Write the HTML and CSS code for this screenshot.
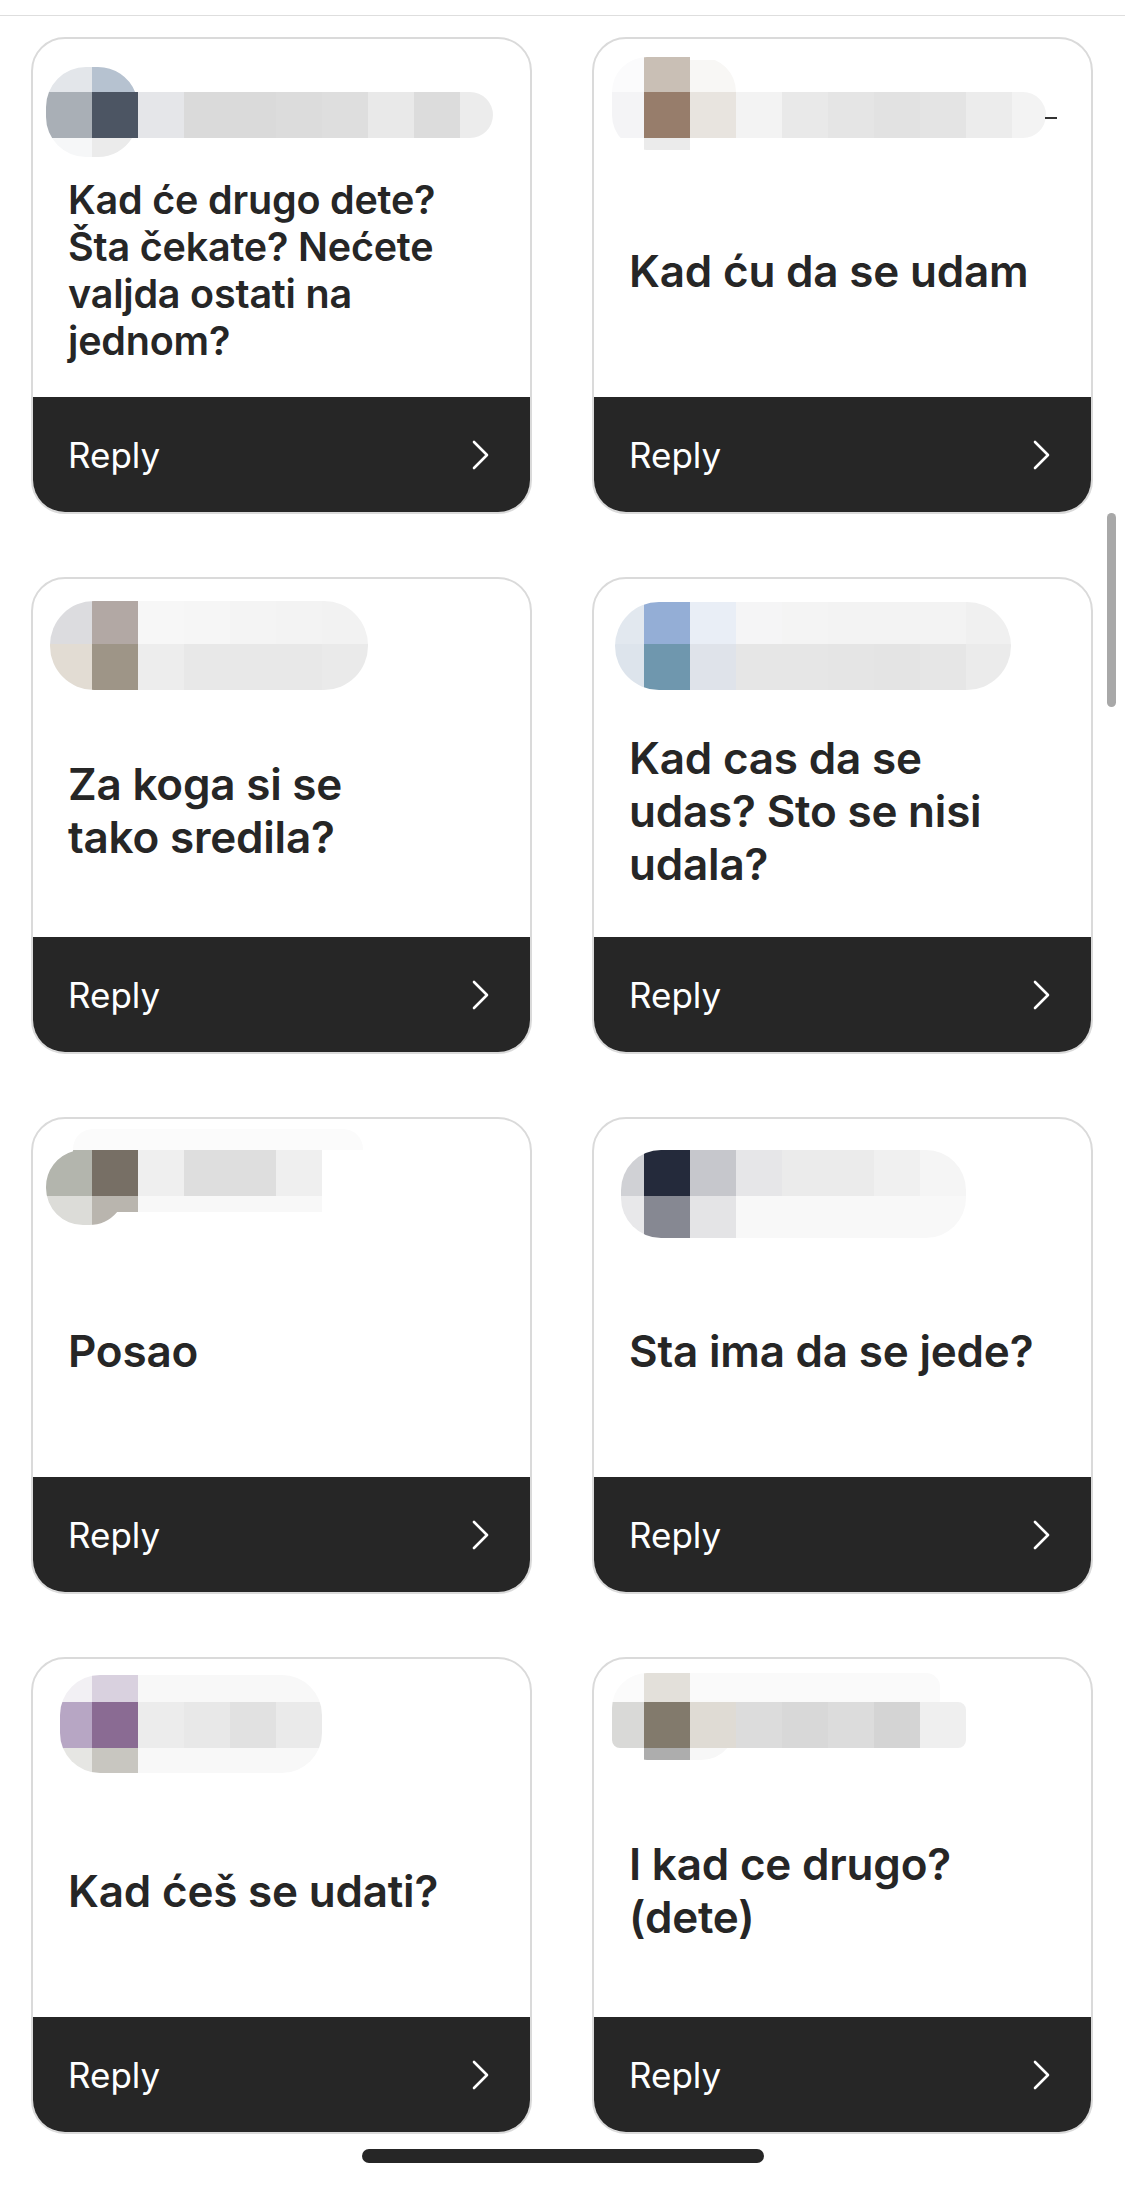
FILE: index.html
```html
<!DOCTYPE html>
<html lang="sr">
<head>
	<meta charset="UTF-8">
	<title>Odgovori na pitanja</title>
	<link rel="stylesheet" href="styles.css">
</head>
<body>
	<div class="topbar"></div>

	<div class="grid">

		<!-- 1 -->
		<div class="card">
			<svg class="mosaic" width="497" height="106" viewBox="0 0 497 106">
				<clipPath id="m1">
					<rect x="13" y="28" width="92" height="90" rx="40"/>
					<rect x="13" y="53" width="447" height="46" rx="23"/>
				</clipPath>
				<g clip-path="url(#m1)">
					<rect x="13" y="7" width="46" height="46" fill="#e3e6ea"/>
					<rect x="59" y="7" width="46" height="46" fill="#b6c2d0"/>
					<rect x="13" y="53" width="46" height="46" fill="#a9afb6"/>
					<rect x="59" y="53" width="46" height="46" fill="#4c5563"/>
					<rect x="105" y="53" width="46" height="46" fill="#e5e6e9"/>
					<rect x="151" y="53" width="46" height="46" fill="#dadada"/>
					<rect x="197" y="53" width="46" height="46" fill="#dadada"/>
					<rect x="243" y="53" width="46" height="46" fill="#dcdcdc"/>
					<rect x="289" y="53" width="46" height="46" fill="#dedede"/>
					<rect x="335" y="53" width="46" height="46" fill="#e9e9e9"/>
					<rect x="381" y="53" width="46" height="46" fill="#dcdcdc"/>
					<rect x="427" y="53" width="46" height="46" fill="#ececec"/>
					<rect x="13" y="99" width="46" height="46" fill="#f6f7f8"/>
					<rect x="59" y="99" width="46" height="46" fill="#ebebeb"/>
				</g>
			</svg>
			<div class="question small">Kad će drugo dete?<br>Šta čekate? Nećete<br>valjda ostati na<br>jednom?</div>
			<div class="reply">
				<span>Reply</span>
				<svg class="chevron" width="18" height="30" viewBox="0 0 18 30"><path d="M2 2 L15 15 L2 28"/></svg>
			</div>
		</div>

		<!-- 2 -->
		<div class="card">
			<svg class="mosaic" width="497" height="106" viewBox="0 0 497 106">
				<clipPath id="m2">
					<rect x="18" y="18" width="124" height="93" rx="35"/>
					<rect x="18" y="53" width="434" height="46" rx="23"/>
				</clipPath>
				<g clip-path="url(#m2)">
					<rect x="4" y="7" width="46" height="46" fill="#fbfbfc"/>
					<rect x="50" y="7" width="46" height="46" fill="#c9bfb5"/>
					<rect x="96" y="21" width="46" height="32" fill="#f8f7f5"/>
					<rect x="4" y="53" width="46" height="46" fill="#f4f4f6"/>
					<rect x="50" y="53" width="46" height="46" fill="#977d6b"/>
					<rect x="96" y="53" width="46" height="46" fill="#e8e4df"/>
					<rect x="142" y="53" width="46" height="46" fill="#f3f3f3"/>
					<rect x="188" y="53" width="46" height="46" fill="#e9e9e9"/>
					<rect x="234" y="53" width="46" height="46" fill="#e5e5e5"/>
					<rect x="280" y="53" width="46" height="46" fill="#e2e2e2"/>
					<rect x="326" y="53" width="46" height="46" fill="#e4e4e4"/>
					<rect x="372" y="53" width="46" height="46" fill="#ececec"/>
					<rect x="418" y="53" width="46" height="46" fill="#f3f3f3"/>
					<rect x="50" y="99" width="46" height="12" fill="#ebebeb"/>
				</g>
				<rect x="451" y="78" width="12" height="2" fill="#333"/>
			</svg>
			<div class="question">Kad ću da se udam</div>
			<div class="reply">
				<span>Reply</span>
				<svg class="chevron" width="18" height="30" viewBox="0 0 18 30"><path d="M2 2 L15 15 L2 28"/></svg>
			</div>
		</div>

		<!-- 3 -->
		<div class="card">
			<svg class="mosaic" width="497" height="106" viewBox="0 0 497 106">
				<clipPath id="m3">
					<rect x="17" y="22" width="318" height="89" rx="44"/>
				</clipPath>
				<g clip-path="url(#m3)">
					<rect x="13" y="19" width="46" height="46" fill="#dcdcdf"/>
					<rect x="59" y="19" width="46" height="46" fill="#b2a8a4"/>
					<rect x="105" y="19" width="46" height="46" fill="#f7f7f7"/>
					<rect x="151" y="19" width="46" height="46" fill="#f6f6f6"/>
					<rect x="197" y="19" width="46" height="46" fill="#f4f4f4"/>
					<rect x="243" y="19" width="46" height="46" fill="#f3f3f3"/>
					<rect x="289" y="19" width="46" height="46" fill="#f2f2f2"/>
					<rect x="13" y="65" width="46" height="46" fill="#e2dcd3"/>
					<rect x="59" y="65" width="46" height="46" fill="#9e9587"/>
					<rect x="105" y="65" width="46" height="46" fill="#ededed"/>
					<rect x="151" y="65" width="46" height="46" fill="#e8e8e8"/>
					<rect x="197" y="65" width="46" height="46" fill="#e8e8e8"/>
					<rect x="243" y="65" width="46" height="46" fill="#e8e8e8"/>
					<rect x="289" y="65" width="46" height="46" fill="#eaeaea"/>
				</g>
			</svg>
			<div class="question">Za koga si se<br>tako sredila?</div>
			<div class="reply">
				<span>Reply</span>
				<svg class="chevron" width="18" height="30" viewBox="0 0 18 30"><path d="M2 2 L15 15 L2 28"/></svg>
			</div>
		</div>

		<!-- 4 -->
		<div class="card">
			<svg class="mosaic" width="497" height="106" viewBox="0 0 497 106">
				<clipPath id="m4">
					<rect x="21" y="23" width="396" height="88" rx="44"/>
				</clipPath>
				<g clip-path="url(#m4)">
					<rect x="4" y="19" width="46" height="46" fill="#e2e8ef"/>
					<rect x="50" y="19" width="46" height="46" fill="#94aed6"/>
					<rect x="96" y="19" width="46" height="46" fill="#e9eef6"/>
					<rect x="142" y="19" width="46" height="46" fill="#f5f5f6"/>
					<rect x="188" y="19" width="46" height="46" fill="#f4f4f4"/>
					<rect x="234" y="19" width="46" height="46" fill="#f3f3f3"/>
					<rect x="280" y="19" width="46" height="46" fill="#f3f3f3"/>
					<rect x="326" y="19" width="46" height="46" fill="#f3f3f3"/>
					<rect x="372" y="19" width="46" height="46" fill="#f0f0f0"/>
					<rect x="4" y="65" width="46" height="46" fill="#dde4ec"/>
					<rect x="50" y="65" width="46" height="46" fill="#6f97ae"/>
					<rect x="96" y="65" width="46" height="46" fill="#dfe3ea"/>
					<rect x="142" y="65" width="46" height="46" fill="#e6e6e6"/>
					<rect x="188" y="65" width="46" height="46" fill="#e6e6e6"/>
					<rect x="234" y="65" width="46" height="46" fill="#e5e5e5"/>
					<rect x="280" y="65" width="46" height="46" fill="#e4e4e4"/>
					<rect x="326" y="65" width="46" height="46" fill="#e6e6e6"/>
					<rect x="372" y="65" width="46" height="46" fill="#ebebeb"/>
				</g>
			</svg>
			<div class="question">Kad cas da se<br>udas? Sto se nisi<br>udala?</div>
			<div class="reply">
				<span>Reply</span>
				<svg class="chevron" width="18" height="30" viewBox="0 0 18 30"><path d="M2 2 L15 15 L2 28"/></svg>
			</div>
		</div>

		<!-- 5 -->
		<div class="card">
			<svg class="mosaic" width="497" height="106" viewBox="0 0 497 106">
				<clipPath id="m5">
					<rect x="13" y="31" width="80" height="75" rx="37"/>
					<rect x="50" y="31" width="239" height="62"/>
					<rect x="40" y="10" width="290" height="40" rx="20"/>
				</clipPath>
				<g clip-path="url(#m5)">
					<rect x="13" y="-15" width="320" height="46" fill="#fbfbfb"/>
					<rect x="13" y="31" width="46" height="46" fill="#b3b5ad"/>
					<rect x="59" y="31" width="46" height="46" fill="#776f65"/>
					<rect x="105" y="31" width="46" height="46" fill="#efefef"/>
					<rect x="151" y="31" width="46" height="46" fill="#dedede"/>
					<rect x="197" y="31" width="46" height="46" fill="#dedede"/>
					<rect x="243" y="31" width="46" height="46" fill="#efefef"/>
					<rect x="13" y="77" width="46" height="46" fill="#dcdcd8"/>
					<rect x="59" y="77" width="46" height="46" fill="#b9b5ae"/>
					<rect x="105" y="77" width="184" height="46" fill="#f8f8f8"/>
				</g>
			</svg>
			<div class="question">Posao</div>
			<div class="reply">
				<span>Reply</span>
				<svg class="chevron" width="18" height="30" viewBox="0 0 18 30"><path d="M2 2 L15 15 L2 28"/></svg>
			</div>
		</div>

		<!-- 6 -->
		<div class="card">
			<svg class="mosaic" width="497" height="106" viewBox="0 0 497 106">
				<clipPath id="m6">
					<rect x="27" y="31" width="345" height="88" rx="40"/>
				</clipPath>
				<g clip-path="url(#m6)">
					<rect x="4" y="31" width="46" height="46" fill="#d0d1d5"/>
					<rect x="50" y="31" width="46" height="46" fill="#242a3b"/>
					<rect x="96" y="31" width="46" height="46" fill="#c6c7cc"/>
					<rect x="142" y="31" width="46" height="46" fill="#e6e6e8"/>
					<rect x="188" y="31" width="46" height="46" fill="#ebebeb"/>
					<rect x="234" y="31" width="46" height="46" fill="#ebebeb"/>
					<rect x="280" y="31" width="46" height="46" fill="#f0f0f0"/>
					<rect x="326" y="31" width="46" height="46" fill="#f5f5f5"/>
					<rect x="4" y="77" width="46" height="46" fill="#e8e8ea"/>
					<rect x="50" y="77" width="46" height="46" fill="#868892"/>
					<rect x="96" y="77" width="46" height="46" fill="#e4e4e6"/>
					<rect x="142" y="77" width="230" height="46" fill="#f8f8f8"/>
				</g>
			</svg>
			<div class="question">Sta ima da se jede?</div>
			<div class="reply">
				<span>Reply</span>
				<svg class="chevron" width="18" height="30" viewBox="0 0 18 30"><path d="M2 2 L15 15 L2 28"/></svg>
			</div>
		</div>

		<!-- 7 -->
		<div class="card">
			<svg class="mosaic" width="497" height="106" viewBox="0 0 497 106">
				<clipPath id="m7">
					<rect x="27" y="16" width="262" height="98" rx="40"/>
				</clipPath>
				<g clip-path="url(#m7)">
					<rect x="13" y="-3" width="46" height="46" fill="#f2f0f4"/>
					<rect x="59" y="-3" width="46" height="46" fill="#d9d1df"/>
					<rect x="105" y="-3" width="184" height="46" fill="#f8f8f8"/>
					<rect x="13" y="43" width="46" height="46" fill="#b7a6c4"/>
					<rect x="59" y="43" width="46" height="46" fill="#8a6b93"/>
					<rect x="105" y="43" width="46" height="46" fill="#ececec"/>
					<rect x="151" y="43" width="46" height="46" fill="#e8e8e8"/>
					<rect x="197" y="43" width="46" height="46" fill="#e1e1e1"/>
					<rect x="243" y="43" width="46" height="46" fill="#eaeaea"/>
					<rect x="13" y="89" width="46" height="46" fill="#e6e6e3"/>
					<rect x="59" y="89" width="46" height="46" fill="#c8c6c0"/>
					<rect x="105" y="89" width="184" height="46" fill="#f8f8f8"/>
				</g>
			</svg>
			<div class="question">Kad ćeš se udati?</div>
			<div class="reply">
				<span>Reply</span>
				<svg class="chevron" width="18" height="30" viewBox="0 0 18 30"><path d="M2 2 L15 15 L2 28"/></svg>
			</div>
		</div>

		<!-- 8 -->
		<div class="card">
			<svg class="mosaic" width="497" height="106" viewBox="0 0 497 106">
				<clipPath id="m8">
					<rect x="18" y="43" width="354" height="46" rx="8"/>
					<rect x="18" y="14" width="124" height="87" rx="35"/>
					<rect x="96" y="14" width="250" height="40" rx="14"/>
				</clipPath>
				<g clip-path="url(#m8)">
					<rect x="4" y="-3" width="46" height="46" fill="#fbfbfb"/>
					<rect x="50" y="-3" width="46" height="46" fill="#e3e0da"/>
					<rect x="96" y="-3" width="276" height="46" fill="#fafafa"/>
					<rect x="4" y="43" width="46" height="46" fill="#d9d9d7"/>
					<rect x="50" y="43" width="46" height="46" fill="#827a6c"/>
					<rect x="96" y="43" width="46" height="46" fill="#dfdbd4"/>
					<rect x="142" y="43" width="46" height="46" fill="#dcdcdc"/>
					<rect x="188" y="43" width="46" height="46" fill="#d8d8d8"/>
					<rect x="234" y="43" width="46" height="46" fill="#dcdcdc"/>
					<rect x="280" y="43" width="46" height="46" fill="#d4d4d4"/>
					<rect x="326" y="43" width="46" height="46" fill="#efefef"/>
					<rect x="50" y="89" width="46" height="46" fill="#adadad"/>
					<rect x="96" y="89" width="46" height="46" fill="#f7f7f7"/>
				</g>
			</svg>
			<div class="question">I kad ce drugo?<br>(dete)</div>
			<div class="reply">
				<span>Reply</span>
				<svg class="chevron" width="18" height="30" viewBox="0 0 18 30"><path d="M2 2 L15 15 L2 28"/></svg>
			</div>
		</div>

	</div>

	<div class="home-indicator"></div>
	<div class="scrollbar"></div>
</body>
</html>
```

FILE: styles.css
```css
body {
	margin: 0;
	background-color: rgb(255, 255, 255);
	font-family: Inter, "Noto Sans", "Liberation Sans", sans-serif;
	color: rgb(38, 38, 38);
}

.topbar {
	height: 15px;
	border-bottom: 1px solid rgb(222, 222, 222);
}

.grid {
	display: grid;
	grid-template-columns: 501px 501px;
	column-gap: 60px;
	row-gap: 63px;
	padding: 21px 0 0 31px;
}

.card {
	display: flex;
	flex-direction: column;
	height: 477px;
	box-sizing: border-box;
	border: 2px solid rgb(218, 218, 218);
	border-radius: 34px;
	overflow: hidden;
	background-color: rgb(255, 255, 255);
}

.mosaic {
	display: block;
	flex: none;
	overflow: visible;
}

.question {
	flex: 1;
	display: flex;
	align-items: center;
	padding: 0 30px 0 35px;
	font-size: 44px;
	line-height: 53px;
	font-weight: 600;
	letter-spacing: -0.2px;
}

.question.small {
	font-size: 39.5px;
	line-height: 47px;
}

.reply {
	flex: none;
	display: flex;
	align-items: center;
	justify-content: space-between;
	height: 115px;
	padding: 0 40px 0 35px;
	background-color: rgb(38, 38, 38);
	color: rgb(255, 255, 255);
	font-size: 35px;
	font-weight: 400;
}

.chevron {
	display: block;
}

.chevron path {
	fill: none;
	stroke: rgb(255, 255, 255);
	stroke-width: 2.6;
	stroke-linecap: round;
	stroke-linejoin: round;
}

.home-indicator {
	width: 402px;
	height: 14px;
	margin: 15px auto 0;
	border-radius: 7px;
	background-color: rgb(38, 38, 38);
}

.scrollbar {
	position: fixed;
	top: 513px;
	right: 9px;
	width: 9px;
	height: 194px;
	border-radius: 5px;
	background-color: rgb(168, 168, 168);
}
```
